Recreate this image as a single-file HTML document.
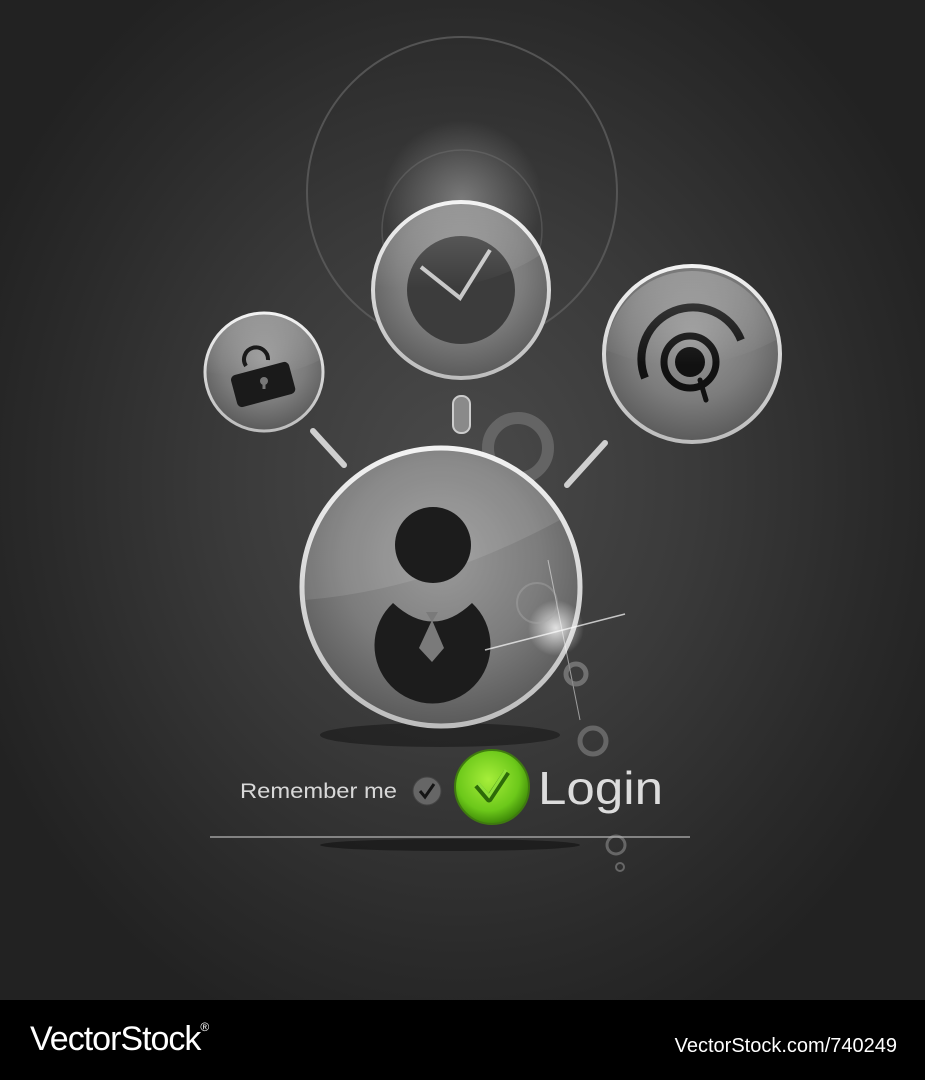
<!DOCTYPE html>
<html><head><meta charset="utf-8"><style>
html,body{margin:0;padding:0}
body{width:925px;height:1080px;overflow:hidden;position:relative;font-family:"Liberation Sans",sans-serif;
background:radial-gradient(ellipse 520px 600px at 460px 480px,#4a4a4a 0%,#3a3a3a 45%,#2a2a2a 80%,#222 100%);}
svg{position:absolute;left:0;top:0}
.foot{position:absolute;left:0;top:1000px;width:925px;height:80px;background:#000;color:#fff}
</style></head><body>
<svg width="925" height="1000" viewBox="0 0 925 1000">
<defs>
<radialGradient id="glass" cx="50%" cy="40%" r="60%">
<stop offset="0" stop-color="#9a9a9a"/><stop offset="0.6" stop-color="#7c7c7c"/><stop offset="1" stop-color="#5a5a5a"/></radialGradient>
<linearGradient id="rim" x1="0" y1="0" x2="0" y2="1"><stop offset="0" stop-color="#f2f2f2"/><stop offset="1" stop-color="#bdbdbd"/></linearGradient>
<radialGradient id="glow" cx="50%" cy="50%" r="50%"><stop offset="0" stop-color="#fff" stop-opacity=".55"/><stop offset="1" stop-color="#fff" stop-opacity="0"/></radialGradient>
<radialGradient id="green" cx="45%" cy="40%" r="60%"><stop offset="0" stop-color="#a6ee3a"/><stop offset=".7" stop-color="#6cc81a"/><stop offset="1" stop-color="#3e8a08"/></radialGradient>
<radialGradient id="star" cx="50%" cy="50%" r="50%"><stop offset="0" stop-color="#fff"/><stop offset=".3" stop-color="#fff" stop-opacity=".7"/><stop offset="1" stop-color="#fff" stop-opacity="0"/></radialGradient>
<linearGradient id="hl" x1="0" y1="0" x2="0" y2="1"><stop offset="0" stop-color="#fff" stop-opacity=".22"/><stop offset="1" stop-color="#fff" stop-opacity="0"/></linearGradient>
</defs>
<!-- halo -->
<circle cx="462" cy="200" r="80" fill="url(#glow)" opacity=".6"/>
<circle cx="462" cy="192" r="155" fill="none" stroke="#5e5e5e" stroke-width="2" opacity=".8"/>
<circle cx="462" cy="230" r="80" fill="none" stroke="#777" stroke-width="1.5" opacity=".4"/>
<!-- sticks -->
<line x1="313" y1="431" x2="344" y2="465" stroke="#cfcfcf" stroke-width="6" stroke-linecap="round"/>
<line x1="567" y1="485" x2="605" y2="443" stroke="#cfcfcf" stroke-width="6" stroke-linecap="round"/>
<rect x="453" y="396" width="17" height="37" rx="8" fill="#8a8a8a" stroke="#ccc" stroke-width="2"/>
<!-- gray ring -->
<circle cx="518" cy="448" r="30" fill="none" stroke="#7a7a7a" stroke-width="12" opacity=".6"/>
<!-- lock -->
<circle cx="264" cy="372" r="59" fill="url(#glass)" stroke="url(#rim)" stroke-width="3"/>
<path d="M207,372 A57,57 0 0 1 320,360 Q270,385 207,372Z" fill="url(#hl)"/>
<path d="M246,366 a12,12 0 1 1 22,-6" fill="none" stroke="#1a1a1a" stroke-width="4"/>
<rect x="233" y="368" width="60" height="33" rx="5" fill="#1a1a1a" transform="rotate(-15 263 384)"/>
<circle cx="264" cy="381" r="4" fill="#777"/><rect x="262.5" y="382" width="3" height="7" fill="#777"/>
<!-- clock -->
<circle cx="461" cy="290" r="88" fill="url(#glass)" stroke="url(#rim)" stroke-width="4"/>
<circle cx="461" cy="290" r="54" fill="#3c3c3c"/>
<path d="M421,267 L460,298 L490,250" fill="none" stroke="#c8c8c8" stroke-width="4"/>
<path d="M375,285 A86,86 0 0 1 540,255 Q470,300 375,285Z" fill="url(#hl)"/>
<!-- target -->
<circle cx="692" cy="354" r="88" fill="url(#glass)" stroke="url(#rim)" stroke-width="4"/>
<path d="M645,378 A46,46 0 0 1 741,340" fill="none" stroke="#111" stroke-width="8"/>
<circle cx="690" cy="362" r="26" fill="none" stroke="#111" stroke-width="7"/>
<circle cx="690" cy="362" r="15" fill="#111"/>
<line x1="700" y1="380" x2="706" y2="400" stroke="#111" stroke-width="5" stroke-linecap="round"/>
<path d="M606,350 A86,86 0 0 1 776,340 Q690,385 606,350Z" fill="url(#hl)"/>
<!-- main -->
<ellipse cx="440" cy="735" rx="120" ry="12" fill="#000" opacity=".35"/>
<circle cx="441" cy="587" r="139" fill="url(#glass)" stroke="url(#rim)" stroke-width="5"/>
<path d="M305,600 A136,136 0 0 1 560,520 Q430,590 305,600Z" fill="#fff" opacity=".1"/>
<circle cx="433" cy="545" r="38" fill="#1c1c1c"/>
<path d="M393,603 Q433,640 472,603 A58,58 0 1 1 393,603Z" fill="#1c1c1c"/>
<path d="M432,620 L444,648 L432,662 L419,648Z" fill="#7a7a7a"/>
<path d="M426,612 L438,612 L432,622Z" fill="#7a7a7a"/>
<!-- flare -->
<circle cx="556" cy="628" r="28" fill="url(#star)" opacity=".8"/>
<line x1="485" y1="650" x2="625" y2="614" stroke="#fff" stroke-width="1.5" opacity=".7"/>
<line x1="548" y1="560" x2="580" y2="720" stroke="#fff" stroke-width="1" opacity=".5"/>
<circle cx="537" cy="603" r="20" fill="none" stroke="#aaa" stroke-width="2" opacity=".4"/>
<circle cx="576" cy="674" r="10" fill="none" stroke="#888" stroke-width="5" opacity=".7"/>
<circle cx="593" cy="741" r="13" fill="none" stroke="#666" stroke-width="5"/>
<circle cx="616" cy="845" r="9" fill="none" stroke="#666" stroke-width="3"/>
<circle cx="620" cy="867" r="4" fill="none" stroke="#666" stroke-width="2"/>
<!-- login row -->
<text x="240" y="798" font-family="Liberation Sans,sans-serif" font-size="21" fill="#d8d8d8" textLength="157" lengthAdjust="spacingAndGlyphs">Remember me</text>
<circle cx="427" cy="791" r="14" fill="#666" stroke="#444" stroke-width="1"/>
<path d="M420,791 L425,797 L434,784" fill="none" stroke="#151515" stroke-width="3"/>
<circle cx="492" cy="787" r="37" fill="url(#green)" stroke="#3f7a10" stroke-width="2"/>
<path d="M477,785 L489,799 L507,772" fill="none" stroke="#2d6a08" stroke-width="7" stroke-linejoin="round"/>
<path d="M478,783 L489,796 L506,770" fill="none" stroke="#8fe03a" stroke-width="3"/>
<text x="538" y="804" font-family="Liberation Sans,sans-serif" font-size="46" fill="#dcdcdc" textLength="125" lengthAdjust="spacingAndGlyphs">Login</text>
<line x1="210" y1="837" x2="690" y2="837" stroke="#bbb" stroke-width="1.5" opacity=".8"/>
<ellipse cx="450" cy="845" rx="130" ry="6" fill="#000" opacity=".4"/>
</svg>
<div class="foot">
<div style="position:absolute;left:30px;top:20px;font-size:34px;letter-spacing:-1px">VectorStock<span style="font-size:12px;vertical-align:top">®</span></div>
<div style="position:absolute;right:28px;top:35px;font-size:20px">VectorStock.com/740249</div>
</div>
</body></html>
